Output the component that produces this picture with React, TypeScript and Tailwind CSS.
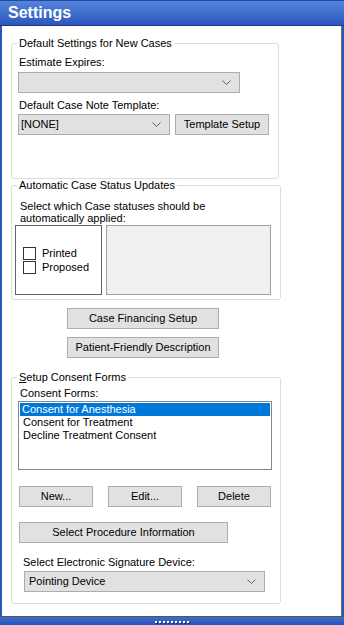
import React from 'react';

const font = "font-['Liberation_Sans',Arial,sans-serif]";

function Chevron() {
  return (
    <svg width="9" height="5" viewBox="0 0 9 5" className="shrink-0">
      <path d="M0.5 0.5 L4.5 4.5 L8.5 0.5" fill="none" stroke="#5f5f5f" strokeWidth="1" />
    </svg>
  );
}

function Dropdown({ value, className = '' }: { value?: string; className?: string }) {
  return (
    <div
      className={`h-[21px] flex items-center justify-between border border-[#adadad] bg-[#e1e1e1] pl-[2px] pr-[8px] ${className}`}>
      <span className="leading-[13px]">{value}</span>
      <Chevron />
    </div>
  );
}

function Btn({ children, className = '' }: { children: React.ReactNode; className?: string }) {
  return (
    <button
      className={`h-[21px] border border-[#adadad] bg-[#e1e1e1] flex items-center justify-center leading-[13px] text-black ${className}`}>
      {children}
    </button>
  );
}

function Group({
  title,
  className = '',
  children,
}: {
  title: React.ReactNode;
  className?: string;
  children: React.ReactNode;
}) {
  return (
    <fieldset className={`border border-[#dcdcdc] rounded-[3px] ${className}`}>
      <legend className="ml-[5px] px-[2px] leading-[13px]">{title}</legend>
      {children}
    </fieldset>
  );
}

function Check({ label }: { label: string }) {
  return (
    <div className="flex items-start gap-[6px] h-[14px]">
      <div className="w-[13px] h-[13px] border border-[#333333] bg-white" />
      <span className="leading-[13px]">{label}</span>
    </div>
  );
}

export default function App() {
  return (
    <div className={`w-[344px] h-[625px] flex flex-col bg-[#2c55b9] text-[11px] text-black ${font}`}>
      {/* Title bar */}
      <div className="h-[26px] shrink-0 border-t border-[#2647a6] border-b border-b-[#1d3788] bg-gradient-to-b from-[#5484da] to-[#2c57bd] flex items-center pl-[8px]">
        <span className="text-white font-bold text-[16px] leading-none">Settings</span>
      </div>

      {/* Body */}
      <div className="flex-1 ml-[2px] mr-[2px] bg-white border-r border-[#6b6b6b] flex flex-col">
        <Group title="Default Settings for New Cases" className="ml-[9px] w-[268px] mt-[11px]">
          <div className="px-[6px] pt-[6px] pb-[43px] flex flex-col">
            <span className="leading-[13px] ml-[1px]">Estimate Expires:</span>
            <Dropdown className="mt-[3px] w-[222px]" />
            <span className="leading-[13px] ml-[1px] mt-[6px]">Default Case Note Template:</span>
            <div className="flex gap-[5px] mt-[2px]">
              <Dropdown value="[NONE]" className="w-[152px]" />
              <Btn className="w-[94px]">Template Setup</Btn>
            </div>
          </div>
        </Group>

        <Group title="Automatic Case Status Updates" className="ml-[9px] w-[270px]">
          <div className="pl-[3px] pt-[8px] pb-[4px] flex flex-col">
            <p className="leading-[12px] ml-[5px]">
              Select which Case statuses should be
              <br />
              automatically applied:
            </p>
            <div className="flex gap-[4px] mt-[1px]">
              <div className="w-[87px] h-[70px] border border-[#646464] bg-white pl-[7px] pt-[21px] flex flex-col">
                <Check label="Printed" />
                <Check label="Proposed" />
              </div>
              <div className="w-[165px] h-[70px] border border-[#a0a0a0] bg-[#f0f0f0]" />
            </div>
          </div>
        </Group>

        <Btn className="mt-[8px] ml-[65px] w-[152px]">Case Financing Setup</Btn>
        <Btn className="mt-[8px] ml-[65px] w-[152px]">Patient-Friendly Description</Btn>

        <Group
          title={
            <>
              <span className="underline">S</span>etup Consent Forms
            </>
          }
          className="ml-[9px] w-[270px] mt-[13px]">
          <div className="px-[6px] pt-[3px] pb-[11px] flex flex-col">
            <span className="leading-[13px] ml-[2px]">Consent Forms:</span>
            <div className="mt-[1px] w-[254px] h-[69px] border border-[#828790] bg-white p-[1px] flex flex-col">
              <span className="leading-[13px] bg-[#0078d7] text-white pl-[2px]">Consent for Anesthesia</span>
              <span className="leading-[13px] pl-[3px]">Consent for Treatment</span>
              <span className="leading-[13px] pl-[3px]">Decline Treatment Consent</span>
            </div>
            <div className="flex gap-[15px] mt-[16px] ml-[1px]">
              <Btn className="w-[74px]">New...</Btn>
              <Btn className="w-[74px]">Edit...</Btn>
              <Btn className="w-[74px]">Delete</Btn>
            </div>
            <Btn className="mt-[15px] ml-[1px] w-[209px]">Select Procedure Information</Btn>
            <span className="leading-[13px] mt-[13px] ml-[5px]">Select Electronic Signature Device:</span>
            <Dropdown value="Pointing Device" className="mt-[2px] ml-[6px] w-[241px] pl-[4px]" />
          </div>
        </Group>
      </div>

      {/* Bottom bar */}
      <div className="h-[9px] shrink-0 border-t border-[#555555] bg-gradient-to-b from-[#3f6bcb] to-[#2a54b9] flex items-center justify-center">
        <div className="flex gap-[2px] mt-[1px]">
          {Array.from({ length: 9 }).map((_, i) => (
            <div key={i} className="w-[2px] h-[2px] bg-white shadow-[1px_1px_0_#1b2f6e]" />
          ))}
        </div>
      </div>
    </div>
  );
}
